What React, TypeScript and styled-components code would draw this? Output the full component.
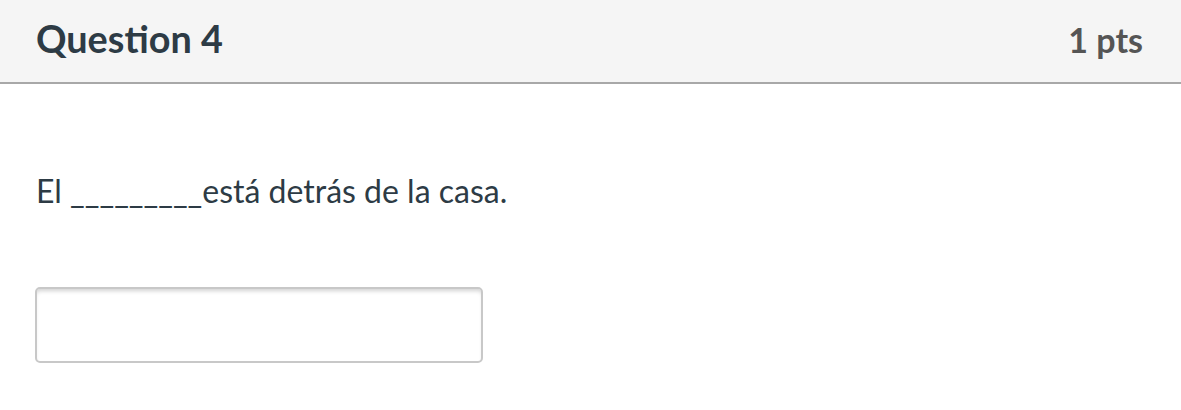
import React from "react";
import styled, { createGlobalStyle } from "styled-components";

const GlobalStyle = createGlobalStyle`
  html, body {
    margin: 0;
    padding: 0;
    background: #ffffff;
  }
  body {
    font-family: Lato, "Liberation Sans", sans-serif;
    color: #2d3b45;
  }
`;

const Wrapping = styled.div`
  width: 1181px;
  height: 410px;
  background: #ffffff;
  overflow: hidden;
`;

const Header = styled.div`
  height: 84px;
  box-sizing: border-box;
  display: flex;
  align-items: baseline;
  justify-content: space-between;
  padding: 16px 38px 0 36px;
  background: #f5f5f5;
  border-bottom: 2px solid #a8a8a8;
  .title {
    font-size: 37.8px;
    line-height: 46px;
    font-weight: 700;
    color: #2d3b45;
  }
  .points {
    font-size: 34px;
    line-height: 46px;
    font-weight: 700;
    color: #555555;
  }
`;

const Body = styled.div`
  padding: 89px 36px 0;
  .question-text {
    margin: 0;
    font-size: 32px;
    line-height: 36px;
    color: #2d3b45;
  }
`;

const AnswerInput = styled.input`
  display: block;
  margin-top: 78px;
  width: 448px;
  height: 76px;
  box-sizing: border-box;
  margin-left: -1px;
  border: 2px solid #c8c8c8;
  border-radius: 5px;
  background: #ffffff;
  box-shadow: inset 0 4px 4px -2px rgba(0, 0, 0, 0.18);
  outline: none;
`;

const App: React.FC = () => {
  return (
    <Wrapping>
      <GlobalStyle />
      <Header>
        <span className="title">Question 4</span>
        <span className="points">1 pts</span>
      </Header>
      <Body>
        <p className="question-text">El _________está detrás de la casa.</p>
        <AnswerInput type="text" aria-label="answer" />
      </Body>
    </Wrapping>
  );
};

export default App;
